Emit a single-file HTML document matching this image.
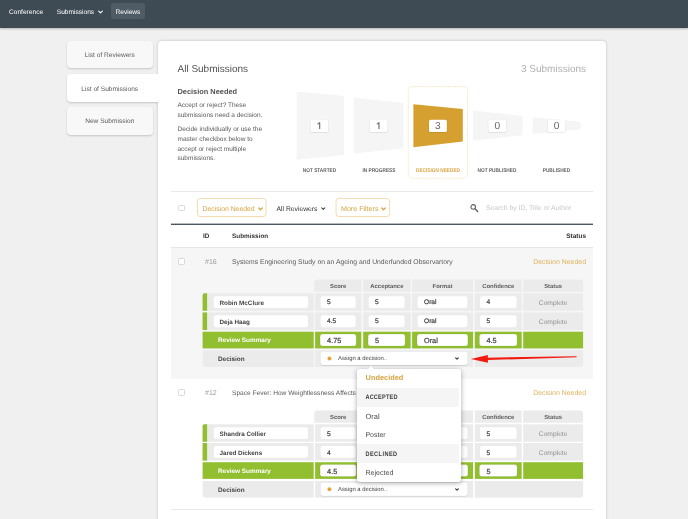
<!DOCTYPE html>
<html>
<head>
<meta charset="utf-8">
<title>All Submissions</title>
<style>
*{box-sizing:border-box;margin:0;padding:0}
html,body{width:688px;height:519px;overflow:hidden}
body{position:relative;background:#f0f0f0;font-family:"Liberation Sans",sans-serif;color:#444;font-size:6.6px;text-rendering:geometricPrecision}
.a{position:absolute;white-space:nowrap}
.t{position:absolute;white-space:nowrap;line-height:10px;height:10px}
.b{font-weight:700}
.c{text-align:center}
.r{text-align:right}
#nav{left:0;top:0;width:688px;height:27.5px;background:#3e4a54;box-shadow:0 1px 2px rgba(0,0,0,.25);z-index:10}
#nav .t{color:#fff;font-size:6.6px;top:6.75px}
#revbtn{left:111px;top:3.2px;width:33.5px;height:16.3px;background:#4f5b65;border-radius:2px}
.tab{left:66.5px;width:86.5px;height:27.5px;background:#f8f8f8;border-radius:4px;box-shadow:0 1px 2px rgba(0,0,0,.18)}
.tab.on{background:#fff;width:92px;border-radius:4px 0 0 4px;z-index:1}
#seam{left:154px;top:74px;width:8px;height:27.5px;background:#fff;z-index:3}
.tt{color:#5c5c5c;font-size:6.6px;text-align:center;left:66.5px;width:86.5px}
#panel{left:158px;top:40.5px;width:448px;height:520px;background:#fff;border-radius:4px;box-shadow:0 0 3px rgba(0,0,0,.22);z-index:2}
#content{left:0;top:0;width:688px;height:519px;z-index:4;will-change:transform}
.h1{font-size:10px;color:#505050;line-height:14px;height:14px}
.h2{font-size:7.4px;font-weight:700;color:#525252}
.p{font-size:6.5px;color:#5a5a5a}
.cnt{width:17.9px;height:12.3px;font-size:10.2px;line-height:13px;text-align:center;color:#666}
.lbl{font-size:4.75px;font-weight:700;color:#5e5e5e;text-align:center;width:59px;line-height:8px;height:8px;transform:scaleY(1.17);transform-origin:50% 35%}
.hr{height:1px;background:#e9e9e9}
.cb{width:6.5px;height:6.5px;border:1px solid #d8d8d8;border-radius:1.5px;background:#fff}
.fbtn{height:18px;border:1px solid #efcb8e;border-radius:3px;background:#fff}
.or{color:#d9a441}
.dk{color:#333}
.g{color:#999}
.blk{left:0;width:688px;height:131px}
.cell{background:#ebebeb}
.hd{font-size:5.9px;font-weight:700;color:#5e5e5e;text-align:center}
.in{background:#fff;border-radius:2.2px;height:12px}
.it{font-size:6.6px;color:#444;-webkit-text-stroke:.22px #444}
.in.s{height:12.2px;border-radius:2.5px;box-shadow:0 0 0 .5px rgba(40,60,0,.2)}
.gr{background:#92bf30}
.sel{height:13.6px;box-shadow:0 .5px .8px rgba(0,0,0,.15),0 0 0 .4px rgba(0,0,0,.05);background:#fff;border-radius:2.5px}
#dd{left:357px;top:368.8px;width:103.6px;height:112.9px;background:#fff;border-radius:3px;box-shadow:0 1px 5px rgba(0,0,0,.35);z-index:20;overflow:hidden}
#dd .sec{left:0;width:102.2px;background:#f5f5f5}
#dd .t{left:8.2px}
</style>
</head>
<body>
<!-- NAV -->
<div id="nav" class="a">
<div class="t " style="left:9px;top:7.75px;">Conference</div>
<div class="t " style="left:56.75px;top:7.75px;">Submissions</div>
<svg class="a" style="left:97.5px;top:10.4px" width="5" height="4.2" viewBox="0 0 6 5"><path d="M0.8 1.2 L3 3.4 L5.2 1.2" fill="none" stroke="#fff" stroke-width="1.3" stroke-linecap="round" stroke-linejoin="round"/></svg>
<div id="revbtn" class="a"></div>
<div class="t " style="left:115.5px;top:7.75px;">Reviews</div>
</div>
<!-- SIDEBAR -->
<div class="a tab" style="top:40.75px"></div>
<div class="a tab on" style="top:74px"></div>
<div class="a tab" style="top:107px"></div>
<div id="panel" class="a"></div>
<div id="seam" class="a"></div>
<div id="content" class="a">
<div class="t tt" style="left:66.5px;top:50.5px;">List of Reviewers</div>
<div class="t tt" style="left:66.5px;top:85px;">List of Submissions</div>
<div class="t tt" style="left:66.5px;top:117.3px;">New Submission</div>
<div class="t h1" style="left:177.5px;top:63px;">All Submissions</div>
<div class="t h1 r" style="left:486px;top:63px;width:100px;color:#b0b0b0">3 Submissions</div>
<div class="t h2" style="left:177.5px;top:86.5px;">Decision Needed</div>
<div class="t p" style="left:177.5px;top:100.5px;">Accept or reject? These</div>
<div class="t p" style="left:177.5px;top:110.5px;">submissions need a decision.</div>
<div class="t p" style="left:177.5px;top:124.5px;">Decide individually or use the</div>
<div class="t p" style="left:177.5px;top:134.5px;">master checkbox below to</div>
<div class="t p" style="left:177.5px;top:144.5px;">accept or reject multiple</div>
<div class="t p" style="left:177.5px;top:154px;">submissions.</div>
<svg class="a" style="left:290px;top:80px" width="310" height="110" viewBox="290 80 310 110">
<polygon points="296.6,91.6 344,96 344,155 296.6,159.7" fill="#f5f5f5"/>
<polygon points="353.7,97.8 403.5,102.8 403.5,148.3 353.7,153.4" fill="#f5f5f5"/>
<polygon points="413.4,104.2 462.8,109 462.8,141.6 413.4,147.2" fill="#d5a02f"/>
<polygon points="472.9,110.4 522.6,115.9 522.6,135.2 472.9,140.7" fill="#f5f5f5"/>
<path d="M532.6 117 L577 121.5 A4.15 4.15 0 0 1 577 129.8 L532.6 134.3 Z" fill="#f5f5f5"/>
<rect x="309.80" y="119.4" width="19.099999999999998" height="13.600000000000001" rx="2.1" fill="#000" opacity=".045"/>
<rect x="310.20" y="120.10000000000001" width="18.299999999999997" height="12.5" rx="1.7" fill="#000" opacity=".07"/>
<rect x="310.40" y="119.7" width="17.9" height="12.3" rx="1.5" fill="#fff"/>
<rect x="369.10" y="119.4" width="19.099999999999998" height="13.600000000000001" rx="2.1" fill="#000" opacity=".045"/>
<rect x="369.50" y="120.10000000000001" width="18.299999999999997" height="12.5" rx="1.7" fill="#000" opacity=".07"/>
<rect x="369.70" y="119.7" width="17.9" height="12.3" rx="1.5" fill="#fff"/>
<rect x="428.40" y="119.4" width="19.099999999999998" height="13.600000000000001" rx="2.1" fill="#000" opacity=".045"/>
<rect x="428.80" y="120.10000000000001" width="18.299999999999997" height="12.5" rx="1.7" fill="#000" opacity=".07"/>
<rect x="429.00" y="119.7" width="17.9" height="12.3" rx="1.5" fill="#fff"/>
<rect x="487.70" y="119.4" width="19.099999999999998" height="13.600000000000001" rx="2.1" fill="#000" opacity=".045"/>
<rect x="488.10" y="120.10000000000001" width="18.299999999999997" height="12.5" rx="1.7" fill="#000" opacity=".07"/>
<rect x="488.30" y="119.7" width="17.9" height="12.3" rx="1.5" fill="#fff"/>
<rect x="547.00" y="119.4" width="19.099999999999998" height="13.600000000000001" rx="2.1" fill="#000" opacity=".045"/>
<rect x="547.40" y="120.10000000000001" width="18.299999999999997" height="12.5" rx="1.7" fill="#000" opacity=".07"/>
<rect x="547.60" y="119.7" width="17.9" height="12.3" rx="1.5" fill="#fff"/>
<path d="M319.10 122.3 H320.25 V128.9 H319.10 V123.8 L317.70 124.7 L317.35 123.85 Z" fill="#707070"/>
<path d="M378.40 122.3 H379.55 V128.9 H378.40 V123.8 L377.00 124.7 L376.65 123.85 Z" fill="#707070"/>
</svg>
<svg class="a" style="left:407px;top:85px" width="62" height="95" viewBox="0 0 62 95"><rect x="1.3" y="1.6" width="59.2" height="91.6" rx="3.5" fill="none" stroke="#ecc98a" stroke-width=".5" stroke-dasharray="1.1 .7"/></svg>
<div class="a cnt" style="left:429.00px;top:120.3px">3</div>
<div class="a cnt" style="left:488.30px;top:120.3px">0</div>
<div class="a cnt" style="left:547.60px;top:120.3px">0</div>
<div class="t lbl" style="left:290px;top:168px;">NOT STARTED</div>
<div class="t lbl" style="left:349.4px;top:168px;">IN PROGRESS</div>
<div class="t lbl" style="left:408.5px;top:168px;color:#d9a441">DECISION NEEDED</div>
<div class="t lbl" style="left:467.5px;top:168px;">NOT PUBLISHED</div>
<div class="t lbl" style="left:527px;top:168px;">PUBLISHED</div>
<!-- filter row -->
<div class="a hr" style="left:171px;top:191px;width:422px"></div>
<div class="a cb" style="left:178px;top:204.5px"></div>
<svg class="a" style="left:196px;top:197px" width="196" height="22" viewBox="196 197 196 22"><rect x="197.45" y="198.45" width="68.6" height="18.1" rx="2.8" fill="#fff" stroke="#efcf96" stroke-width=".75"/><rect x="336.05" y="198.45" width="53.6" height="18.1" rx="2.8" fill="#fff" stroke="#efcf96" stroke-width=".75"/></svg>
<div class="t or" style="left:202.5px;top:204.7px;font-size:6.85px">Decision Needed</div>
<svg class="a" style="left:257.8px;top:206.8px" width="5" height="4" viewBox="0 0 5 4"><path d="M0.8 1 L2.5 2.7 L4.2 1" fill="none" stroke="#d9a441" stroke-width="1.3" stroke-linecap="round" stroke-linejoin="round"/></svg>
<div class="t dk" style="left:276.5px;top:204.7px;font-size:6.75px">All Reviewers</div>
<svg class="a" style="left:321px;top:206.9px" width="4.5" height="3.6" viewBox="0 0 5 4"><path d="M0.8 1 L2.5 2.7 L4.2 1" fill="none" stroke="#444" stroke-width="1.2" stroke-linecap="round" stroke-linejoin="round"/></svg>
<div class="t or" style="left:341px;top:203.7px;font-size:7.1px">More Filters</div>
<svg class="a" style="left:381.3px;top:206.8px" width="5" height="4" viewBox="0 0 5 4"><path d="M0.8 1 L2.5 2.7 L4.2 1" fill="none" stroke="#d9a441" stroke-width="1.3" stroke-linecap="round" stroke-linejoin="round"/></svg>
<svg class="a" style="left:469.9px;top:203px" width="10" height="10" viewBox="0 0 10 10"><circle cx="3.2" cy="3.9" r="2.3" fill="none" stroke="#606060" stroke-width="1.05"/><path d="M5 5.7 L7.7 8.4" stroke="#606060" stroke-width="1.4" stroke-linecap="round"/></svg>
<div class="t " style="left:486px;top:203.7px;font-size:6.8px;color:#c8c8c8">Search by ID, Title or Author</div>
<div class="a" style="left:171px;top:223px;width:422px;height:1px;background:#4a5661;opacity:.4"></div>
<div class="a" style="left:171px;top:224px;width:422px;height:1px;background:#4a5661"></div>
<div class="t b dk" style="left:203px;top:232px;font-size:6.4px">ID</div>
<div class="t b dk" style="left:232px;top:232px;font-size:6.4px">Submission</div>
<div class="t b dk r" style="left:486px;top:232px;width:100px;font-size:6.5px">Status</div>
<div class="a" style="left:171px;top:247px;width:422px;height:132px;background:#f6f6f6;border-top:1px solid #e6e6e6"></div>
<div class="a hr" style="left:171px;top:509px;width:422px"></div>
<div class="a blk" style="top:248px">
<svg class="a" style="left:200px;top:28px" width="386" height="94" viewBox="200 28 386 94">
<path d="M317.30 31.40 H361.30 V43.75 H314.30 V34.40 A3 3 0 0 1 317.30 31.40 Z" fill="#ebebeb"/>
<rect x="363.20" y="31.40" width="47.40" height="12.35" fill="#ebebeb"/>
<rect x="412.10" y="31.40" width="60.90" height="12.35" fill="#ebebeb"/>
<rect x="474.80" y="31.40" width="46.90" height="12.35" fill="#ebebeb"/>
<path d="M523.20 31.40 H580.10 A3 3 0 0 1 583.10 34.40 V43.75 H523.20 V31.40 Z" fill="#ebebeb"/>
<rect x="202.60" y="45.30" width="111.10" height="17.45" fill="#ebebeb"/>
<path d="M204.60 45.30 H207.10 V62.75 H202.60 V47.30 A2 2 0 0 1 204.60 45.30 Z" fill="#92bf30"/>
<rect x="213.80" y="48.15" width="94.20" height="11.90" rx="2.2" fill="#fff"/>
<rect x="315.10" y="45.30" width="46.20" height="17.45" fill="#ebebeb"/>
<rect x="320.70" y="48.15" width="34.90" height="11.90" rx="2.2" fill="#fff"/>
<rect x="363.20" y="45.30" width="47.40" height="17.45" fill="#ebebeb"/>
<rect x="368.70" y="48.15" width="35.80" height="11.90" rx="2.2" fill="#fff"/>
<rect x="412.10" y="45.30" width="60.90" height="17.45" fill="#ebebeb"/>
<rect x="417.60" y="48.15" width="49.70" height="11.90" rx="2.2" fill="#fff"/>
<rect x="474.80" y="45.30" width="46.90" height="17.45" fill="#ebebeb"/>
<rect x="480.00" y="48.15" width="36.50" height="11.90" rx="2.2" fill="#fff"/>
<rect x="523.20" y="45.30" width="59.90" height="17.45" fill="#ebebeb"/>
<rect x="202.60" y="64.45" width="111.10" height="17.55" fill="#ebebeb"/>
<rect x="202.60" y="64.45" width="4.50" height="17.55" fill="#92bf30"/>
<rect x="213.80" y="67.30" width="94.20" height="11.90" rx="2.2" fill="#fff"/>
<rect x="315.10" y="64.45" width="46.20" height="17.55" fill="#ebebeb"/>
<rect x="320.70" y="67.30" width="34.90" height="11.90" rx="2.2" fill="#fff"/>
<rect x="363.20" y="64.45" width="47.40" height="17.55" fill="#ebebeb"/>
<rect x="368.70" y="67.30" width="35.80" height="11.90" rx="2.2" fill="#fff"/>
<rect x="412.10" y="64.45" width="60.90" height="17.55" fill="#ebebeb"/>
<rect x="417.60" y="67.30" width="49.70" height="11.90" rx="2.2" fill="#fff"/>
<rect x="474.80" y="64.45" width="46.90" height="17.55" fill="#ebebeb"/>
<rect x="480.00" y="67.30" width="36.50" height="11.90" rx="2.2" fill="#fff"/>
<rect x="523.20" y="64.45" width="59.90" height="17.55" fill="#ebebeb"/>
<rect x="202.60" y="83.70" width="111.10" height="16.70" fill="#92bf30"/>
<rect x="315.10" y="83.70" width="46.20" height="16.70" fill="#92bf30"/>
<rect x="320.10" y="86.00" width="36.10" height="12.10" rx="2.5" fill="#fff" stroke="#3c5a00" stroke-opacity=".22" stroke-width=".5"/>
<rect x="363.20" y="83.70" width="47.40" height="16.70" fill="#92bf30"/>
<rect x="368.10" y="86.00" width="37.00" height="12.10" rx="2.5" fill="#fff" stroke="#3c5a00" stroke-opacity=".22" stroke-width=".5"/>
<rect x="412.10" y="83.70" width="60.90" height="16.70" fill="#92bf30"/>
<rect x="417.00" y="86.00" width="50.90" height="12.10" rx="2.5" fill="#fff" stroke="#3c5a00" stroke-opacity=".22" stroke-width=".5"/>
<rect x="474.80" y="83.70" width="46.90" height="16.70" fill="#92bf30"/>
<rect x="479.40" y="86.00" width="37.70" height="12.10" rx="2.5" fill="#fff" stroke="#3c5a00" stroke-opacity=".22" stroke-width=".5"/>
<rect x="523.20" y="83.70" width="59.90" height="16.70" fill="#92bf30"/>
<path d="M202.60 102.20 H313.70 V118.90 H205.60 A3 3 0 0 1 202.60 115.90 V102.20 Z" fill="#ebebeb"/>
<rect x="315.10" y="102.20" width="157.90" height="16.70" fill="#ebebeb"/>
<path d="M474.80 102.20 H583.10 V115.90 A3 3 0 0 1 580.10 118.90 H474.80 V102.20 Z" fill="#ebebeb"/>
<rect x="320.3" y="104.2" width="147.5" height="13.5" rx="2.5" fill="#000" opacity=".10"/>
<rect x="320.3" y="103.60000000000001" width="147.5" height="13.5" rx="2.5" fill="#fff" stroke="#000" stroke-opacity=".07" stroke-width=".5"/>
<circle cx="329.45" cy="110.45" r="1.95" fill="#e9a23b"/>
</svg>
<div class="a cb" style="left:178px;top:10.2px"></div>
<div class="t g" style="left:205px;top:10px;font-size:7px">#16</div>
<div class="t " style="left:232px;top:10px;font-size:6.81px;color:#5a5a5a">Systems Engineering Study on an Ageing and Underfunded Observartory</div>
<div class="t r" style="left:486px;top:10px;width:100px;font-size:6.94px;color:#dfb15a">Decision Needed</div>
<div class="t hd" style="left:315.1px;top:33.8px;width:46.2px;">Score</div>
<div class="t hd" style="left:363.2px;top:33.8px;width:47.4px;">Acceptance</div>
<div class="t hd" style="left:412.1px;top:33.8px;width:60.9px;">Format</div>
<div class="t hd" style="left:474.8px;top:33.8px;width:46.9px;">Confidence</div>
<div class="t hd" style="left:523.2px;top:33.8px;width:59.9px;">Status</div>
<div class="t b" style="left:219.5px;top:51.3px;font-size:6.3px;color:#444">Robin McClure</div>
<div class="t it" style="left:327.09999999999997px;top:50.3px;">5</div>
<div class="t it" style="left:375.09999999999997px;top:50.3px;">5</div>
<div class="t it" style="left:424.0px;top:50.3px;">Oral</div>
<div class="t it" style="left:486.4px;top:50.3px;">4</div>
<div class="t c" style="left:523.2px;top:51px;width:59.9px;color:#8e8e8e;font-size:6.7px">Complete</div>
<div class="t b" style="left:219.5px;top:69.6px;font-size:6.3px;color:#444">Deja Haag</div>
<div class="t it" style="left:327.09999999999997px;top:68.6px;">4.5</div>
<div class="t it" style="left:375.09999999999997px;top:68.6px;">5</div>
<div class="t it" style="left:424.0px;top:68.6px;">Oral</div>
<div class="t it" style="left:486.4px;top:68.6px;">5</div>
<div class="t c" style="left:523.2px;top:70.3px;width:59.9px;color:#8e8e8e;font-size:6.7px">Complete</div>
<div class="t b" style="left:218px;top:88.1px;color:#fff;font-size:6.4px">Review Summary</div>
<div class="t it" style="left:327.09999999999997px;top:88.1px;font-size:7.3px">4.75</div>
<div class="t it" style="left:375.09999999999997px;top:88.1px;font-size:7.3px">5</div>
<div class="t it" style="left:424.0px;top:88.1px;font-size:7.3px">Oral</div>
<div class="t it" style="left:486.4px;top:88.1px;font-size:7.3px">4.5</div>
<div class="t b" style="left:218px;top:107.3px;color:#444;font-size:6.4px">Decision</div>
<div class="t " style="left:338px;top:106.3px;font-size:5.9px;color:#444">Assign a decision..</div>
<svg class="a" style="left:454.5px;top:109.1px" width="4" height="3.2" viewBox="0 0 5 4"><path d="M0.8 1 L2.5 2.7 L4.2 1" fill="none" stroke="#333" stroke-width="1.4" stroke-linecap="round" stroke-linejoin="round"/></svg>
</div>
<div class="a blk" style="top:379px">
<svg class="a" style="left:200px;top:28px" width="386" height="94" viewBox="200 28 386 94">
<path d="M317.30 31.40 H361.30 V43.75 H314.30 V34.40 A3 3 0 0 1 317.30 31.40 Z" fill="#ebebeb"/>
<rect x="363.20" y="31.40" width="47.40" height="12.35" fill="#ebebeb"/>
<rect x="412.10" y="31.40" width="60.90" height="12.35" fill="#ebebeb"/>
<rect x="474.80" y="31.40" width="46.90" height="12.35" fill="#ebebeb"/>
<path d="M523.20 31.40 H580.10 A3 3 0 0 1 583.10 34.40 V43.75 H523.20 V31.40 Z" fill="#ebebeb"/>
<rect x="202.60" y="45.30" width="111.10" height="17.45" fill="#ebebeb"/>
<path d="M204.60 45.30 H207.10 V62.75 H202.60 V47.30 A2 2 0 0 1 204.60 45.30 Z" fill="#92bf30"/>
<rect x="213.80" y="48.15" width="94.20" height="11.90" rx="2.2" fill="#fff"/>
<rect x="315.10" y="45.30" width="46.20" height="17.45" fill="#ebebeb"/>
<rect x="320.70" y="48.15" width="34.90" height="11.90" rx="2.2" fill="#fff"/>
<rect x="363.20" y="45.30" width="47.40" height="17.45" fill="#ebebeb"/>
<rect x="368.70" y="48.15" width="35.80" height="11.90" rx="2.2" fill="#fff"/>
<rect x="412.10" y="45.30" width="60.90" height="17.45" fill="#ebebeb"/>
<rect x="417.60" y="48.15" width="49.70" height="11.90" rx="2.2" fill="#fff"/>
<rect x="474.80" y="45.30" width="46.90" height="17.45" fill="#ebebeb"/>
<rect x="480.00" y="48.15" width="36.50" height="11.90" rx="2.2" fill="#fff"/>
<rect x="523.20" y="45.30" width="59.90" height="17.45" fill="#ebebeb"/>
<rect x="202.60" y="64.05" width="111.10" height="17.55" fill="#ebebeb"/>
<rect x="202.60" y="64.05" width="4.50" height="17.55" fill="#92bf30"/>
<rect x="213.80" y="66.90" width="94.20" height="11.90" rx="2.2" fill="#fff"/>
<rect x="315.10" y="64.05" width="46.20" height="17.55" fill="#ebebeb"/>
<rect x="320.70" y="66.90" width="34.90" height="11.90" rx="2.2" fill="#fff"/>
<rect x="363.20" y="64.05" width="47.40" height="17.55" fill="#ebebeb"/>
<rect x="368.70" y="66.90" width="35.80" height="11.90" rx="2.2" fill="#fff"/>
<rect x="412.10" y="64.05" width="60.90" height="17.55" fill="#ebebeb"/>
<rect x="417.60" y="66.90" width="49.70" height="11.90" rx="2.2" fill="#fff"/>
<rect x="474.80" y="64.05" width="46.90" height="17.55" fill="#ebebeb"/>
<rect x="480.00" y="66.90" width="36.50" height="11.90" rx="2.2" fill="#fff"/>
<rect x="523.20" y="64.05" width="59.90" height="17.55" fill="#ebebeb"/>
<rect x="202.60" y="83.20" width="111.10" height="16.70" fill="#92bf30"/>
<rect x="315.10" y="83.20" width="46.20" height="16.70" fill="#92bf30"/>
<rect x="320.10" y="85.50" width="36.10" height="12.10" rx="2.5" fill="#fff" stroke="#3c5a00" stroke-opacity=".22" stroke-width=".5"/>
<rect x="363.20" y="83.20" width="47.40" height="16.70" fill="#92bf30"/>
<rect x="368.10" y="85.50" width="37.00" height="12.10" rx="2.5" fill="#fff" stroke="#3c5a00" stroke-opacity=".22" stroke-width=".5"/>
<rect x="412.10" y="83.20" width="60.90" height="16.70" fill="#92bf30"/>
<rect x="417.00" y="85.50" width="50.90" height="12.10" rx="2.5" fill="#fff" stroke="#3c5a00" stroke-opacity=".22" stroke-width=".5"/>
<rect x="474.80" y="83.20" width="46.90" height="16.70" fill="#92bf30"/>
<rect x="479.40" y="85.50" width="37.70" height="12.10" rx="2.5" fill="#fff" stroke="#3c5a00" stroke-opacity=".22" stroke-width=".5"/>
<rect x="523.20" y="83.20" width="59.90" height="16.70" fill="#92bf30"/>
<path d="M202.60 102.00 H313.70 V118.70 H205.60 A3 3 0 0 1 202.60 115.70 V102.00 Z" fill="#ebebeb"/>
<rect x="315.10" y="102.00" width="157.90" height="16.70" fill="#ebebeb"/>
<path d="M474.80 102.00 H583.10 V115.70 A3 3 0 0 1 580.10 118.70 H474.80 V102.00 Z" fill="#ebebeb"/>
<rect x="320.3" y="104.0" width="147.5" height="13.5" rx="2.5" fill="#000" opacity=".10"/>
<rect x="320.3" y="103.4" width="147.5" height="13.5" rx="2.5" fill="#fff" stroke="#000" stroke-opacity=".07" stroke-width=".5"/>
<circle cx="329.45" cy="110.25" r="1.95" fill="#e9a23b"/>
</svg>
<div class="a cb" style="left:178px;top:10.2px"></div>
<div class="t g" style="left:205px;top:10px;font-size:7px">#12</div>
<div class="t " style="left:232px;top:10px;font-size:6.62px;color:#5a5a5a">Space Fever: How Weightlessness Affects</div>
<div class="t r" style="left:486px;top:10px;width:100px;font-size:6.94px;color:#dfb15a">Decision Needed</div>
<div class="t hd" style="left:315.1px;top:33.8px;width:46.2px;">Score</div>
<div class="t hd" style="left:363.2px;top:33.8px;width:47.4px;">Acceptance</div>
<div class="t hd" style="left:412.1px;top:33.8px;width:60.9px;">Format</div>
<div class="t hd" style="left:474.8px;top:33.8px;width:46.9px;">Confidence</div>
<div class="t hd" style="left:523.2px;top:33.8px;width:59.9px;">Status</div>
<div class="t b" style="left:219.5px;top:51.3px;font-size:6.3px;color:#444">Shandra Collier</div>
<div class="t it" style="left:327.09999999999997px;top:51.3px;">5</div>
<div class="t it" style="left:375.09999999999997px;top:51.3px;">5</div>
<div class="t it" style="left:424.0px;top:51.3px;">Oral</div>
<div class="t it" style="left:486.4px;top:51.3px;">5</div>
<div class="t c" style="left:523.2px;top:51px;width:59.9px;color:#8e8e8e;font-size:6.7px">Complete</div>
<div class="t b" style="left:219.5px;top:69.6px;font-size:6.3px;color:#444">Jared Dickens</div>
<div class="t it" style="left:327.09999999999997px;top:69.6px;">4</div>
<div class="t it" style="left:375.09999999999997px;top:69.6px;">5</div>
<div class="t it" style="left:424.0px;top:69.6px;">Oral</div>
<div class="t it" style="left:486.4px;top:69.6px;">5</div>
<div class="t c" style="left:523.2px;top:70.3px;width:59.9px;color:#8e8e8e;font-size:6.7px">Complete</div>
<div class="t b" style="left:218px;top:88.1px;color:#fff;font-size:6.4px">Review Summary</div>
<div class="t it" style="left:327.09999999999997px;top:88.1px;font-size:7.3px">4.5</div>
<div class="t it" style="left:375.09999999999997px;top:88.1px;font-size:7.3px">5</div>
<div class="t it" style="left:424.0px;top:88.1px;font-size:7.3px">Oral</div>
<div class="t it" style="left:486.4px;top:88.1px;font-size:7.3px">5</div>
<div class="t b" style="left:218px;top:107.3px;color:#444;font-size:6.4px">Decision</div>
<div class="t " style="left:338px;top:106.3px;font-size:5.9px;color:#444">Assign a decision..</div>
<svg class="a" style="left:454.5px;top:109.1px" width="4" height="3.2" viewBox="0 0 5 4"><path d="M0.8 1 L2.5 2.7 L4.2 1" fill="none" stroke="#333" stroke-width="1.4" stroke-linecap="round" stroke-linejoin="round"/></svg>
</div>
<svg class="a" style="left:468px;top:350px;z-index:15" width="112" height="16" viewBox="468 350 112 16"><path d="M487 357.75 L576.2 356.15 A.5 .5 0 0 1 576.3 357.25 L487 360.05 Z" fill="#f3190f"/><path d="M470.9 359.1 L487.9 354.9 L487.9 362.7 Z" fill="#f3190f"/></svg>
<svg class="a" style="left:366px;top:364px;z-index:21" width="10" height="6" viewBox="366 364 10 6"><path d="M367.6 369.3 L370.9 365.4 L374.2 369.3 Z" fill="#fff"/><path d="M367.6 369.1 L370.9 365.4 L374.2 369.1" fill="none" stroke="#d9d9d9" stroke-width=".5"/></svg>
<div id="dd" class="a">
<div class="a sec" style="top:18.8px;height:19px"></div>
<div class="a sec" style="top:75.6px;height:18.3px"></div>
<div class="t b or" style="left:8.6px;top:4.3px;font-size:7.4px">Undecided</div>
<div class="t b" style="left:8.4px;top:24.5px;font-size:5.6px;color:#3c3c3c;letter-spacing:.2px;transform:scaleY(1.14);transform-origin:0 62%">ACCEPTED</div>
<div class="t " style="left:8.4px;top:43px;font-size:7.5px;color:#4d4d4d">Oral</div>
<div class="t " style="left:8.4px;top:62px;font-size:7px;color:#4d4d4d">Poster</div>
<div class="t b" style="left:8.4px;top:80.8px;font-size:5.6px;color:#3c3c3c;letter-spacing:.45px;transform:scaleY(1.14);transform-origin:0 62%">DECLINED</div>
<div class="t " style="left:8.4px;top:99.6px;font-size:7.1px;color:#4d4d4d">Rejected</div>
</div>
</div>
</body>
</html>
